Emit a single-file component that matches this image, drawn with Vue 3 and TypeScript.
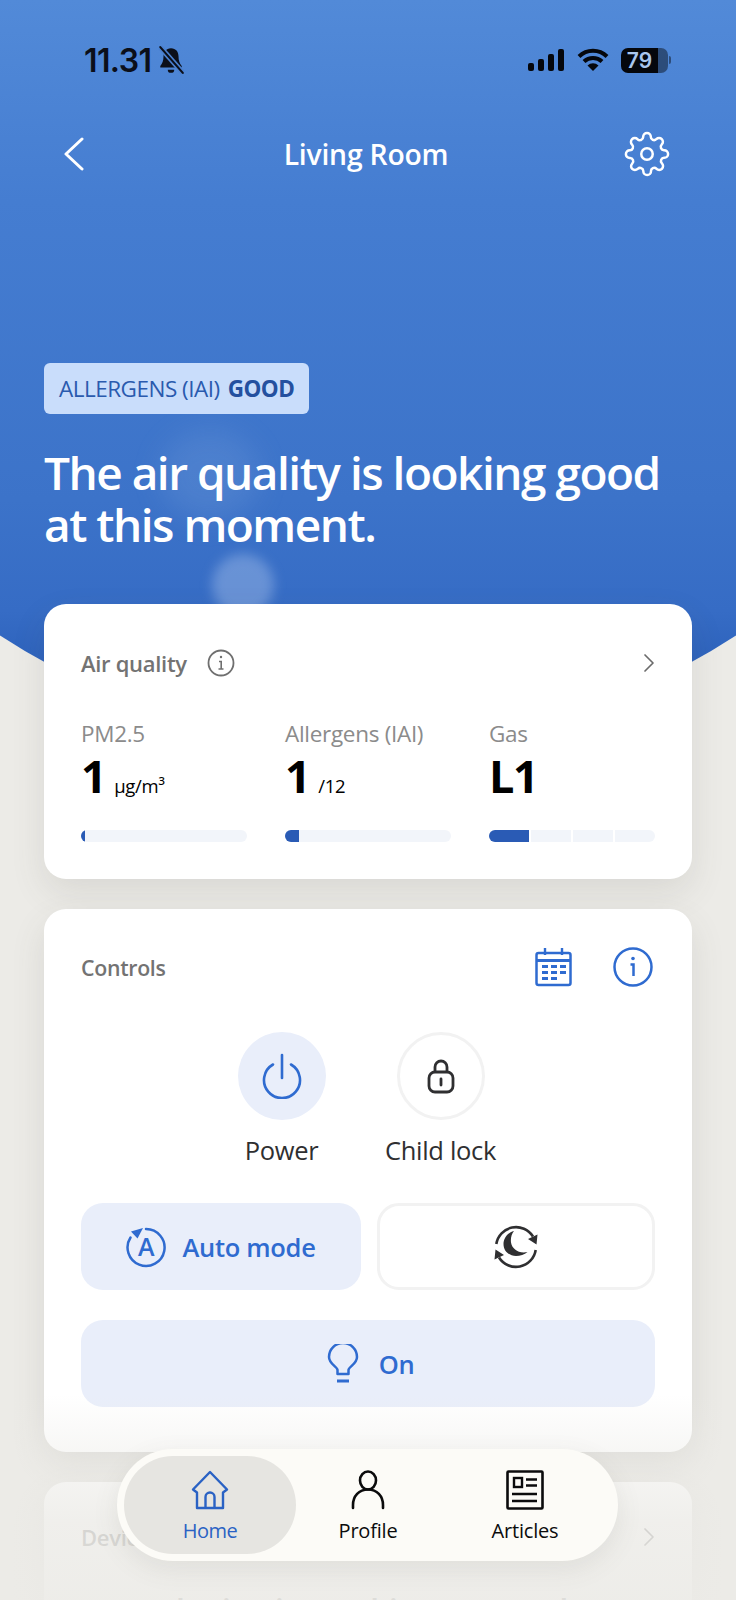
<script setup lang="ts">
const metrics = [
  { label: 'PM2.5', value: '1', unit: 'µg/m³', fill: 4 },
  { label: 'Allergens (IAI)', value: '1', unit: '/12', fill: 14 },
]

const gear =
  'M19.4 15a1.65 1.65 0 0 0 .33 1.82l.06.06a2 2 0 0 1 0 2.83 2 2 0 0 1-2.83 0l-.06-.06a1.65 1.65 0 0 0-1.82-.33 1.65 1.65 0 0 0-1 1.51V21a2 2 0 0 1-2 2 2 2 0 0 1-2-2v-.09A1.65 1.65 0 0 0 9 19.4a1.65 1.65 0 0 0-1.82.33l-.06.06a2 2 0 0 1-2.83 0 2 2 0 0 1 0-2.83l.06-.06a1.65 1.65 0 0 0 .33-1.82 1.65 1.65 0 0 0-1.51-1H3a2 2 0 0 1-2-2 2 2 0 0 1 2-2h.09A1.65 1.65 0 0 0 4.6 9a1.65 1.65 0 0 0-.33-1.82l-.06-.06a2 2 0 0 1 0-2.83 2 2 0 0 1 2.83 0l.06.06a1.65 1.65 0 0 0 1.82.33H9a1.65 1.65 0 0 0 1-1.51V3a2 2 0 0 1 2-2 2 2 0 0 1 2 2v.09a1.65 1.65 0 0 0 1 1.51 1.65 1.65 0 0 0 1.82-.33l.06-.06a2 2 0 0 1 2.83 0 2 2 0 0 1 0 2.83l-.06.06a1.65 1.65 0 0 0-.33 1.82V9a1.65 1.65 0 0 0 1.51 1H21a2 2 0 0 1 2 2 2 2 0 0 1-2 2h-.09a1.65 1.65 0 0 0-1.51 1z'
</script>

<template>
  <div class="screen">
    <header class="hero">
      <span class="blob blob-small"></span>
      <span class="blob blob-large"></span>

      <div class="status-bar">
        <div class="status-left">
          <span class="time">11.31</span>
          <svg class="bell" width="28" height="30" viewBox="0 0 26 28">
            <path d="M13 3c-4.6 0-7 3.400-7 7.500 0 4.300-1 6.500-3 9V21h20v-1.500c-2-2.500-3-4.700-3-9C20 6.400 17.600 3 13 3z" fill="#0b0f1a" />
            <path d="M10 23h6a3 3 0 0 1-6 0z" fill="#0b0f1a" />
            <path d="M3 2l21 24" stroke="#4a80d0" stroke-width="5" />
            <path d="M3 2l21 24" stroke="#0b0f1a" stroke-width="2" stroke-linecap="round" />
          </svg>
        </div>
        <div class="status-right">
          <svg width="36" height="24" viewBox="0 0 36 24" fill="#05070c">
            <rect x="0" y="15" width="6" height="8" rx="2" />
            <rect x="10" y="11" width="6" height="12" rx="2" />
            <rect x="20" y="6" width="6" height="17" rx="2" />
            <rect x="30" y="1" width="6" height="22" rx="2" />
          </svg>
          <svg class="wifi" width="32" height="24" viewBox="0 0 32 24">
            <path d="M2 8.500a20 20 0 0 1 28 0M7 13.500a13 13 0 0 1 18 0" fill="none" stroke="#05070c" stroke-width="4" />
            <path d="M16 23l-5.500-5.500a8 8 0 0 1 11 0z" fill="#05070c" />
          </svg>
          <div class="battery">
            <span class="battery-fill">79</span>
            <span class="battery-rest"></span>
          </div>
          <span class="battery-cap"></span>
        </div>
      </div>

      <nav class="top-nav">
        <svg class="nav-back" width="24" height="34" viewBox="0 0 24 34">
          <path d="M20 2L4 17l16 15" fill="none" stroke="#fff" stroke-width="3" stroke-linecap="round" stroke-linejoin="round" />
        </svg>
        <h1 class="room">Living Room</h1>
        <svg class="nav-gear" width="46" height="46" viewBox="0 0 24 24" fill="none" stroke="#fff" stroke-width="1.300" stroke-linejoin="round">
          <circle cx="12" cy="12" r="3" />
          <path :d="gear" />
        </svg>
      </nav>

      <div class="badge">ALLERGENS (IAI)<strong>GOOD</strong></div>
      <p class="headline">The air quality is looking good at this moment.</p>
    </header>

    <main class="cards">
      <section class="card air-card">
        <div class="card-head">
          <div class="card-title-wrap">
            <h2 class="card-title">Air quality</h2>
            <svg width="28" height="28" viewBox="0 0 28 28" fill="none" stroke="#6f6f6f" stroke-width="1.800">
              <circle cx="14" cy="14" r="12.500" />
              <path d="M12 12.500h2.200V20M11.500 20h5" stroke-width="1.600" />
              <circle cx="14" cy="8" r="1.200" fill="#6f6f6f" stroke="none" />
            </svg>
          </div>
          <svg width="12" height="20" viewBox="0 0 12 20">
            <path d="M2 2l8 8-8 8" fill="none" stroke="#6b6b6b" stroke-width="1.700" stroke-linecap="round" stroke-linejoin="round" />
          </svg>
        </div>
        <div class="metrics">
          <div v-for="m in metrics" :key="m.label" class="metric">
            <div class="metric-label">{{ m.label }}</div>
            <div class="metric-value">{{ m.value }}<span class="metric-unit">{{ m.unit }}</span></div>
            <div class="meter"><span class="meter-fill" :style="{ width: m.fill + 'px' }"></span></div>
          </div>
          <div class="metric">
            <div class="metric-label">Gas</div>
            <div class="metric-value">L1</div>
            <div class="meter meter-split">
              <span class="seg seg-on"></span>
              <span class="seg"></span>
              <span class="seg"></span>
              <span class="seg"></span>
            </div>
          </div>
        </div>
      </section>

      <section class="card controls-card">
        <div class="card-head controls-head">
          <h2 class="card-title">Controls</h2>
          <div class="head-icons">
            <svg width="38" height="40" viewBox="0 0 38 40" fill="none" stroke="#2f6bd0">
              <rect x="1.500" y="6" width="34" height="32" rx="2" stroke-width="2.500" />
              <path d="M1.500 13.500h34" stroke-width="3" />
              <path d="M10 1v7M27 1v7" stroke-width="2.400" />
              <path d="M7 19.500h6M16 19.500h6M25 19.500h6M7 25.500h6M16 25.500h6M25 25.500h6M7 31.500h6M16 31.500h6" stroke-width="3" />
            </svg>
            <svg width="40" height="40" viewBox="0 0 40 40" fill="none" stroke="#2f6bd0" stroke-width="2.500">
              <circle cx="20" cy="20" r="18.500" />
              <path d="M17.500 17.500h3V29" />
              <circle cx="20" cy="11.500" r="1.800" fill="#2f6bd0" stroke="none" />
            </svg>
          </div>
        </div>

        <div class="toggles">
          <div class="toggle">
            <div class="toggle-circle toggle-on">
              <svg width="40" height="46" viewBox="0 0 40 46" fill="none" stroke="#2f6bd0" stroke-width="2.600" stroke-linecap="round">
                <path d="M20 2v23" />
                <path d="M11 11.500a18 18 0 1 0 18 0" />
              </svg>
            </div>
            <span class="toggle-label">Power</span>
          </div>
          <div class="toggle">
            <div class="toggle-circle toggle-off">
              <svg width="30" height="36" viewBox="0 0 30 36" fill="none" stroke="#2f2f31" stroke-width="2.800">
                <path d="M9 15V9a6 6 0 0 1 12 0v6" />
                <rect x="3" y="14" width="24" height="20" rx="6" />
                <path d="M15 21v6" stroke-linecap="round" />
              </svg>
            </div>
            <span class="toggle-label">Child lock</span>
          </div>
        </div>

        <div class="mode-row">
          <button class="mode-btn mode-on">
            <svg width="40" height="42" viewBox="0 0 40 42" fill="none" stroke="#2f6bd0" stroke-width="2.500">
              <path d="M20 3a18.500 18.500 0 1 1-15.500 8.500" stroke-linecap="round" />
              <path d="M17 2L5 5.500l6.500 7z" fill="#2f6bd0" stroke="none" />
              <text class="auto-letter" x="20" y="30" text-anchor="middle">A</text>
            </svg>
            <span>Auto mode</span>
          </button>
          <button class="mode-btn mode-off">
            <svg width="46" height="46" viewBox="0 0 46 46" fill="none">
              <path d="M3.300 20A20 20 0 0 1 40 12.500M42.700 26A20 20 0 0 1 6 33.500" stroke="#2f2f31" stroke-width="2.600" />
              <path d="M43.500 20.500L44.500 10.500 35 15zM2.500 25.500L1.500 35.500 11 31z" fill="#2f2f31" />
              <path d="M21 7C13.500 9 10.500 15 10.500 20c0 7 5.500 12 12.500 12 4 0 8.500-1.500 11.500-4C26 30 19 25 18 18.500c-.5-4.500.5-8.500 3-11.500z" fill="#2f2f31" />
            </svg>
          </button>
        </div>

        <button class="mode-btn mode-on light-btn">
          <svg width="32" height="40" viewBox="0 0 32 40" fill="none" stroke="#2f6bd0" stroke-width="2.500" stroke-linejoin="round">
            <path d="M10.500 30v-4c0-3-8.500-6-8.500-13a14 14 0 0 1 28 0c0 7-8.500 10-8.500 13v4z" />
            <path d="M10 37h12" stroke-width="3" />
          </svg>
          <span>On</span>
        </button>
      </section>

      <section class="card device-card">
        <div class="card-head">
          <h2 class="card-title">Device</h2>
          <svg width="12" height="20" viewBox="0 0 12 20">
            <path d="M2 2l8 8-8 8" fill="none" stroke="#6b6b6b" stroke-width="1.700" stroke-linecap="round" stroke-linejoin="round" />
          </svg>
        </div>
        <p class="device-text">Your device is working correctly</p>
      </section>
    </main>

    <div class="bottom-fade"></div>

    <nav class="tab-bar">
      <div class="tab tab-active">
        <svg width="38" height="40" viewBox="0 0 38 40" fill="none" stroke="#2a62c4" stroke-width="2.400" stroke-linejoin="round">
          <path d="M19 2L2 19.500l4 3V38h26V22.500l4-3z" />
          <path d="M14.500 38V27a4.500 4.500 0 0 1 9 0V38" />
        </svg>
        <span>Home</span>
      </div>
      <div class="tab">
        <svg width="34" height="40" viewBox="0 0 34 40" fill="none" stroke="#0b0b0c" stroke-width="2.600">
          <ellipse cx="17" cy="10.500" rx="8" ry="9" />
          <path d="M2 38v-3c0-9 6-15.500 15-15.500S32 26 32 35v3" stroke-linecap="round" />
        </svg>
        <span>Profile</span>
      </div>
      <div class="tab">
        <svg width="38" height="40" viewBox="0 0 38 40" fill="none" stroke="#0b0b0c">
          <rect x="1.500" y="1.500" width="35" height="37" rx="1" stroke-width="2.600" />
          <rect x="8" y="8" width="8" height="9" stroke-width="2.400" />
          <path d="M20 9.500h11M20 15.500h11M6 24h25M6 31h25" stroke-width="2.600" />
        </svg>
        <span>Articles</span>
      </div>
    </nav>
  </div>
</template>

<style>
html,
body {
  margin: 0;
  background: #ecebe7;
}
</style>

<style scoped>
.screen {
  position: relative;
  width: 736px;
  height: 1600px;
  overflow: hidden;
  background: #ecebe7;
  font-family: "Open Sans", "Noto Sans", sans-serif;
}

.hero {
  position: relative;
  height: 745px;
  box-sizing: border-box;
  padding-top: 40px;
  background: linear-gradient(180deg, #528ad8 0%, #457dd1 27%, #3c73c9 67%, #366cc5 82%, #2c61bb 90%);
  clip-path: circle(673px at 50% 72px);
}

.blob {
  position: absolute;
  border-radius: 50%;
}

.blob-small {
  left: 212px;
  top: 554px;
  width: 62px;
  height: 62px;
  background: rgba(190, 210, 240, 0.36);
  filter: blur(6px);
}

.blob-large {
  left: 160px;
  top: 430px;
  width: 100px;
  height: 90px;
  background: rgba(170, 195, 235, 0.14);
  filter: blur(14px);
}

.status-bar {
  position: relative;
  display: flex;
  justify-content: space-between;
  align-items: center;
  height: 40px;
  padding: 0 65px 0 84px;
}

.status-left {
  display: flex;
  align-items: center;
  gap: 6px;
}

.time {
  font-family: Inter, sans-serif;
  font-size: 32px;
  font-weight: 600;
  letter-spacing: -0.6px;
  color: #0b0f1a;
}

.status-right {
  display: flex;
  align-items: center;
  gap: 11px;
}

.wifi {
  margin-left: 2px;
}

.battery {
  display: flex;
  width: 47px;
  height: 25px;
  margin-left: 1px;
  border-radius: 7px;
  overflow: hidden;
}

.battery-fill {
  width: 37px;
  background: #05070c;
  color: #a9c6ee;
  font-family: Inter, sans-serif;
  font-size: 21px;
  font-weight: 600;
  line-height: 25px;
  text-align: center;
}

.battery-rest {
  flex: 1;
  background: rgba(5, 7, 12, 0.45);
}

.battery-cap {
  width: 2px;
  height: 8px;
  margin-left: -10px;
  border-radius: 0 2px 2px 0;
  background: rgba(5, 7, 12, 0.45);
}

.top-nav {
  position: relative;
  display: grid;
  grid-template-columns: 1fr auto 1fr;
  align-items: center;
  margin-top: 51px;
  padding: 0 66px 0 62px;
  color: #fff;
}

.nav-gear {
  justify-self: end;
}

.room {
  margin: 0;
  font-size: 28.3px;
  font-weight: 600;
  letter-spacing: -0.2px;
}

.badge {
  position: relative;
  display: inline-flex;
  align-items: center;
  gap: 8px;
  margin: 186px 0 0 44px;
  height: 51px;
  padding: 0 15px;
  border-radius: 6px;
  background: #c9ddfb;
  color: #2a5aae;
  font-size: 22.5px;
  letter-spacing: -0.5px;
}

.badge strong {
  font-weight: 700;
  color: #24509f;
}

.headline {
  position: relative;
  width: 650px;
  margin: 32px 0 0 44px;
  color: #fff;
  font-size: 46px;
  font-weight: 600;
  line-height: 52px;
  letter-spacing: -1.5px;
}

.cards {
  position: absolute;
  left: 44px;
  right: 44px;
  top: 604px;
  display: flex;
  flex-direction: column;
  gap: 30px;
}

.card {
  background: #fff;
  border-radius: 22px;
  box-shadow: 0 14px 34px rgba(80, 80, 70, 0.12);
}

.air-card {
  height: 275px;
  box-sizing: border-box;
  padding: 44px 37px 0;
}

.card-head {
  display: flex;
  justify-content: space-between;
  align-items: center;
}

.card-title-wrap {
  display: flex;
  align-items: center;
  gap: 20px;
}

.card-title {
  margin: 0;
  font-size: 22px;
  font-weight: 600;
  color: #737373;
  letter-spacing: -0.3px;
}

.controls-head .card-title {
  font-size: 21.3px;
}

.metrics {
  display: grid;
  grid-template-columns: repeat(3, 166px);
  justify-content: space-between;
  margin-top: 42px;
}

.metric-label {
  font-size: 22.5px;
  color: #8b8b8b;
  letter-spacing: -0.3px;
  line-height: 28px;
}

.metric-value {
  height: 50px;
  margin-top: 3px;
  font-size: 45px;
  font-weight: 700;
  line-height: 50px;
  letter-spacing: -1.5px;
  color: #000;
}

.metric-unit {
  margin-left: 9px;
  font-size: 18.5px;
  font-weight: 400;
  letter-spacing: -0.3px;
}

.meter {
  display: flex;
  height: 12px;
  margin-top: 29px;
  border-radius: 6px;
  overflow: hidden;
  background: #f2f5fa;
}

.meter-fill {
  background: #2a5bb5;
}

.meter-split {
  gap: 2px;
  background: none;
}

.seg {
  flex: 1;
  background: #f2f5fa;
}

.seg-on {
  background: #2a5bb5;
}

.controls-card {
  height: 543px;
  box-sizing: border-box;
  padding: 38px 37px 0;
}

.controls-head .head-icons {
  display: flex;
  align-items: center;
  gap: 40px;
  margin-right: 2px;
}

.toggles {
  display: flex;
  justify-content: center;
  gap: 49px;
  margin-top: 45px;
  padding-right: 14px;
}

.toggle {
  display: flex;
  flex-direction: column;
  align-items: center;
  width: 110px;
  gap: 13px;
}

.toggle-circle {
  display: flex;
  align-items: center;
  justify-content: center;
  width: 88px;
  height: 88px;
  box-sizing: border-box;
  border-radius: 50%;
}

.toggle-on {
  background: #e9eefa;
}

.toggle-off {
  border: 3px solid #f2f2f2;
}

.toggle-label {
  font-size: 25.5px;
  color: #2f2f31;
  white-space: nowrap;
  letter-spacing: -0.3px;
}

.mode-row {
  display: grid;
  grid-template-columns: 280px 278px;
  justify-content: space-between;
  margin-top: 36px;
}

.mode-btn {
  display: flex;
  align-items: center;
  justify-content: center;
  gap: 16px;
  height: 87px;
  box-sizing: border-box;
  border: 0;
  border-radius: 22px;
  padding: 0;
  font-family: inherit;
  font-size: 25.5px;
  font-weight: 600;
  color: #2f6bd0;
  letter-spacing: -0.3px;
}

.auto-letter {
  font-family: "Open Sans", sans-serif;
  font-size: 25px;
  font-weight: 600;
  fill: #2f6bd0;
  stroke: none;
}

.mode-on {
  background: #e9eefa;
}

.mode-off {
  background: #fff;
  border: 3px solid #f2f2f2;
}

.light-btn {
  width: 100%;
  margin-top: 30px;
  gap: 20px;
  padding-left: 5px;
}

.device-card {
  height: 300px;
  box-sizing: border-box;
  padding: 40px 37px 0;
}

.device-text {
  margin: 36px 0 0;
  font-size: 33px;
  font-weight: 600;
  color: #333;
}

.bottom-fade {
  position: absolute;
  left: 0;
  right: 0;
  top: 1395px;
  bottom: 0;
  background: linear-gradient(180deg, rgba(236, 235, 231, 0) 0%, rgba(236, 235, 231, 0.4) 27%, rgba(236, 235, 231, 0.8) 62%, rgba(236, 235, 231, 0.92) 100%);
}

.tab-bar {
  position: absolute;
  left: 117px;
  top: 1449px;
  display: grid;
  grid-template-columns: 172px 144px 170px;
  width: 501px;
  height: 112px;
  box-sizing: border-box;
  padding: 7px 8px 7px 7px;
  background: #fcfbf7;
  border-radius: 56px;
  box-shadow: 0 8px 26px rgba(90, 90, 80, 0.1);
}

.tab {
  display: flex;
  flex-direction: column;
  align-items: center;
  justify-content: center;
  gap: 7px;
  padding-top: 4px;
  font-size: 20px;
  font-weight: 500;
  letter-spacing: -0.2px;
  color: #0b0b0c;
}

.tab-active {
  border-radius: 50px;
  background: #e6e5e1;
  color: #2a62c4;
}

.tab-active span {
  letter-spacing: -0.5px;
}
</style>
